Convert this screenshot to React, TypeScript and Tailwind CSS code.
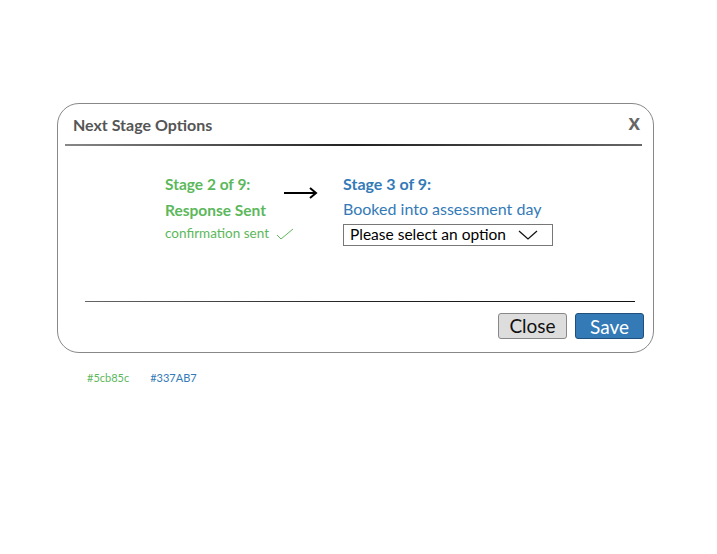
import React from "react";

function CheckMark() {
  return (
    <svg width="18" height="13" viewBox="0 0 18 13" className="ml-[7px] shrink-0">
      <path d="M1 8 L5 12 L17 2" fill="none" stroke="#5cb85c" strokeWidth="1" />
    </svg>
  );
}

function Chevron() {
  return (
    <svg width="20" height="10" viewBox="0 0 20 10" className="shrink-0">
      <path d="M1 1 L10 9 L19 1" fill="none" stroke="#111" strokeWidth="1.3" />
    </svg>
  );
}

function Arrow() {
  return (
    <svg width="34" height="12" viewBox="0 0 34 12">
      <path d="M0 6 H32 M26 1 L32 6 L26 11" fill="none" stroke="#000" strokeWidth="2" />
    </svg>
  );
}

export default function App() {
  return (
    <div className="w-[717px] h-[554px] bg-white font-['Lato',sans-serif] pt-[103px] pl-[57px]">
      <div className="w-[597px] h-[250px] border border-[#888] rounded-[22px] flex flex-col">
        <div className="flex items-center justify-between pl-[15px] pr-[13px] pt-[12px] h-[30px]">
          <h1 className="text-[16px] font-bold text-[#555]">Next Stage Options</h1>
          <span className="text-[22px] font-bold text-[#666] leading-none mt-[-6px]">x</span>
        </div>
        <div className="ml-[7px] mr-[11px] mt-[10px] h-[2px] bg-gradient-to-r from-[#888] via-[#222] to-[#666]" />
        <div className="flex pl-[107px] pt-[25px]">
          <div className="flex flex-col text-[#5cb85c] w-[120px]">
            <p className="text-[15.5px] font-bold leading-[27px]">Stage 2 of 9:</p>
            <p className="text-[15.5px] font-bold leading-[24px]">Response Sent</p>
            <p className="text-[13.5px] leading-[22px] flex items-center whitespace-nowrap">
              confirmation sent
              <CheckMark />
            </p>
          </div>
          <div className="pt-[16px] ml-[-1px] w-[59px]">
            <Arrow />
          </div>
          <div className="flex flex-col text-[#337AB7]">
            <p className="text-[16px] font-bold leading-[26px]">Stage 3 of 9:</p>
            <p className="text-[16px] leading-[24px]">Booked into assessment day</p>
            <div className="mt-[3px] w-[210px] h-[22px] border border-[#777] flex items-center pl-[6px] gap-[12px] text-[#000] text-[15.5px]">
              <span>Please select an option</span>
              <Chevron />
            </div>
          </div>
        </div>
        <div className="ml-[27px] mr-[18px] mt-[55px] h-[1px] bg-gradient-to-r from-[#666] via-[#222] to-[#111]" />
        <div className="flex justify-end gap-[8px] pr-[9px] pt-[11px]">
          <button className="w-[69px] h-[26px] bg-[#ddd] border border-[#888] rounded-[3px] text-[19px] text-[#111] leading-none pb-[2px]">
            Close
          </button>
          <button className="w-[69px] h-[26px] bg-[#337AB7] border border-[#1f4f7a] rounded-[3px] text-[19px] text-white leading-none">
            Save
          </button>
        </div>
      </div>
      <div className="flex gap-[21px] pl-[30px] pt-[17px] text-[11px]">
        <span className="text-[#5cb85c]">#5cb85c</span>
        <span className="text-[#337AB7]">#337AB7</span>
      </div>
    </div>
  );
}
